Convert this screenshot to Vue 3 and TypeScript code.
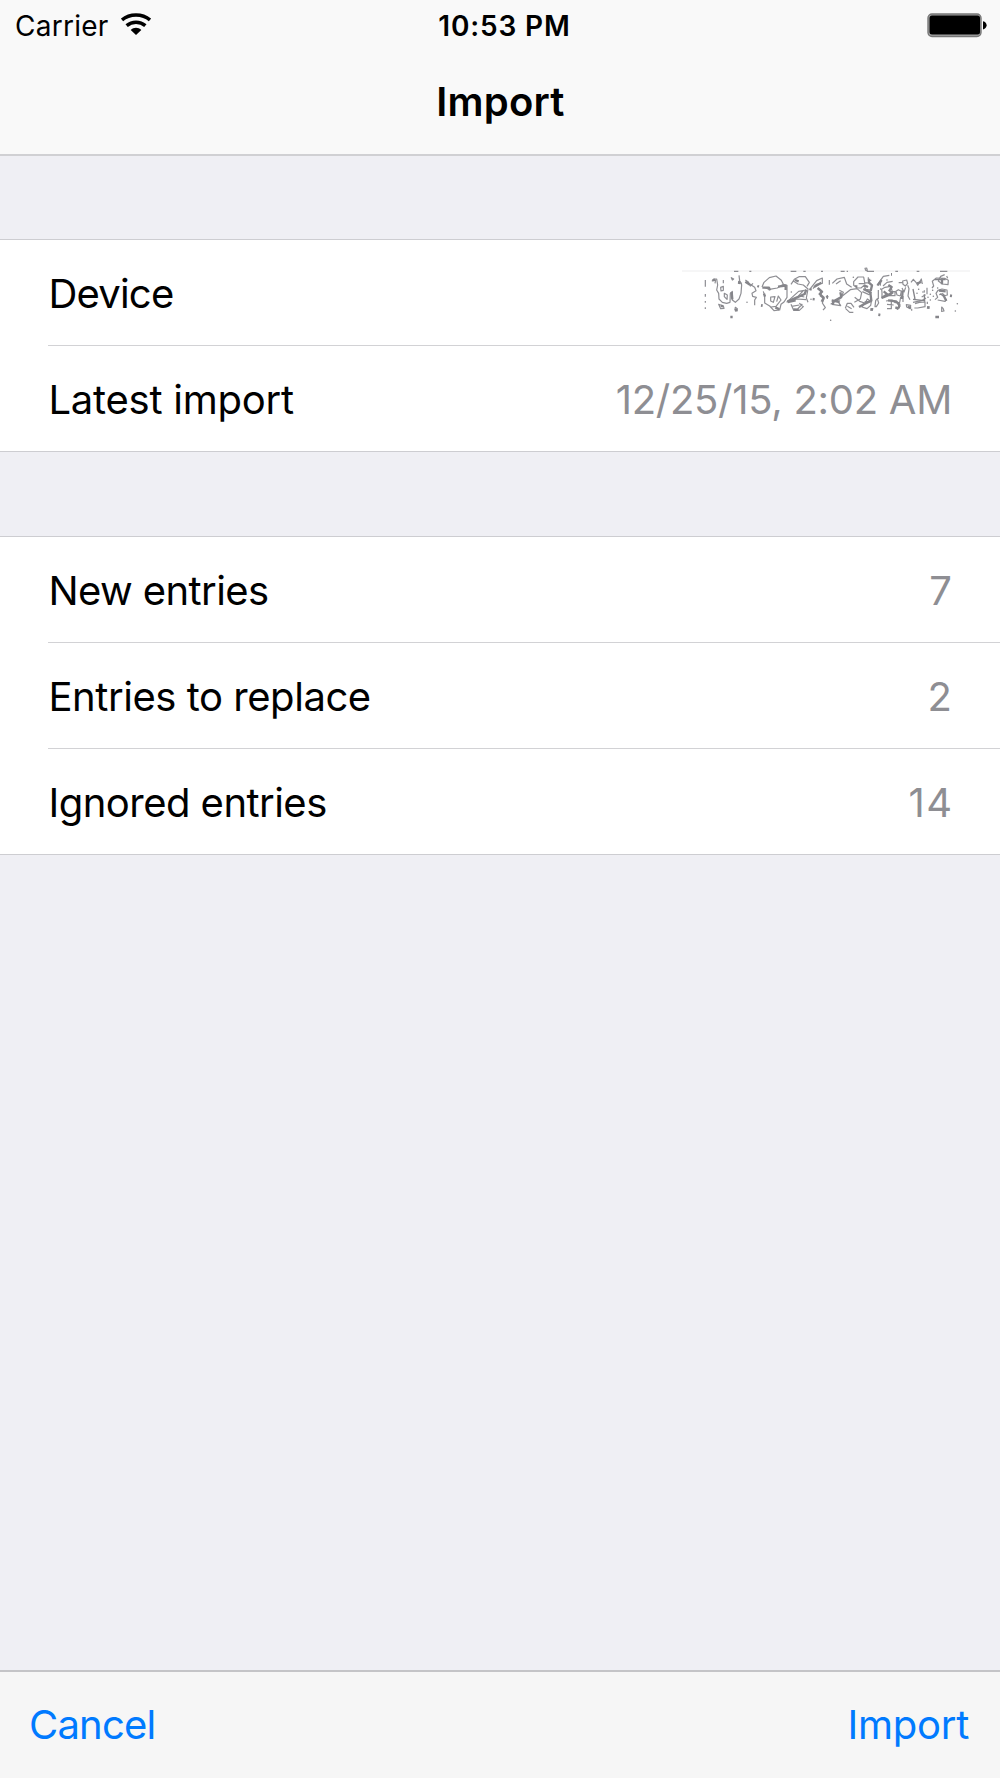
<script setup lang="ts">
interface Entry {
  label: string
  value?: string
  spacing: string
  valueSpacing?: string
}

const groups: Entry[][] = [
  [
    { label: 'Device', spacing: 'sp-device' },
    { label: 'Latest import', value: '12/25/15, 2:02 AM', spacing: 'sp-latest', valueSpacing: 'sp-date' },
  ],
  [
    { label: 'New entries', value: '7', spacing: 'sp-new' },
    { label: 'Entries to replace', value: '2', spacing: 'sp-replace' },
    { label: 'Ignored entries', value: '14', spacing: 'sp-ignored', valueSpacing: 'sp-count' },
  ],
]
</script>

<template>
  <div class="screen">
    <header class="top">
      <div class="status">
        <div class="carrier">
          <span class="carrier-name">Carrier</span>
          <svg class="wifi" width="30" height="22" viewBox="0 0 90 66">
            <g fill="none" stroke="#000" stroke-width="10.5">
              <path d="M3 21C26 1 64 1 87 21" />
              <path d="M17 38C33 24 57 24 73 38" />
            </g>
            <path d="M29 51C38 42 52 42 61 51L45 66Z" />
          </svg>
        </div>
        <span class="time">10:53 PM</span>
        <div class="power">
          <svg width="60" height="25" viewBox="0 0 60 25">
            <rect x="1" y="1" width="53" height="22.5" rx="4" fill="#a3a3a3" stroke="#777" stroke-width="1.4" />
            <rect x="2.5" y="2.5" width="50.5" height="19" rx="2.5" fill="#000" />
            <path d="M56 8.2C60.8 9 60.8 15.6 56 16.4Z" />
          </svg>
        </div>
      </div>
      <h1 class="title">Import</h1>
    </header>

    <main class="content">
      <section v-for="(group, g) in groups" :key="g" class="group">
        <div v-for="row in group" :key="row.label" class="row">
          <span :class="['label', row.spacing]">{{ row.label }}</span>
          <span v-if="row.value" :class="['value', row.valueSpacing]">{{ row.value }}</span>
          <svg v-else class="scribble" width="300" height="60" viewBox="30 105 900 180">
            <path d="M36 123H900" stroke="#ededee" stroke-width="3" />
            <g fill="none" stroke="#8e8e93" stroke-width="3.6" stroke-linejoin="round">
              <path d="M106 150V170M106 192V200M106 213V218M106 232V237M192 124H205M238 124H244M362 124H379M400 124H407M453 124H459M512 124H524M530 124H534M590 124H612M676 124H684M740 124H748M810 124H832" />
              <path d="M126 154L131 147H140L143 165L140 180L146 190L147 207L157 217L170 220L180 217L181 190L187 184V210L196 217L207 207L213 190L215 164L209 152L207 136" />
              <path d="M137 148L135 160M160 150V160M152 172L160 169V181L153 183ZM163 190L172 195L171 208L163 200ZM146 223L160 228L162 235L152 236ZM196 232L202 236L201 243L195 238ZM184 143L191 147L187 150Z" />
              <path d="M204 157L216 160M226 150L235 156L241 168L249 160M240 163L254 172L258 182L246 190L248 199L259 202L254 210V226" />
              <path d="M276 171L282 157L298 143L318 138L334 151L340 163L351 166V202L342 216L333 223L329 240L312 242L299 228L284 219V197L280 184M283 172L298 178L322 174L340 163M302 201L315 200L310 217L302 213ZM320 215L325 198L333 210L318 229L303 231" />
              <path d="M363 163L373 148L387 140H406L418 157L411 169M370 153L384 162L400 165L414 177L409 204L414 217M350 217L366 202L386 184L408 180M350 215L382 207L408 209M363 223L371 241H388L400 230L388 220M365 229L388 225M383 237L397 222M401 181L386 197L403 201" />
              <path d="M421 176L440 152L457 144L457 160L439 163L429 176M443 175L455 187L451 198L462 206L457 219L466 233L459 240M478 150V164M482 223L500 210H511M472 195V207" />
              <path d="M487 160L501 147L523 142L530 162L545 172M512 152L498 162M508 181L520 187L513 204L486 215M516 199L541 179L561 176L575 188L571 207L553 217M486 223L512 227L502 211" />
              <path d="M551 155L564 141H581L584 158L597 159L606 165L603 180L587 178L582 166L573 174H562L551 166ZM566 161H586M595 142V151L604 151M554 202L569 214L584 219L576 231L591 236L602 226L604 215H584M526 235L532 220H543L552 232M527 236L539 247H550M532 229L545 236M586 218L592 207L605 215M577 185L597 194L605 187" />
              <path d="M621 166L633 149L640 139L658 136M631 167L632 154M625 180V207M617 212L622 206L626 219L619 230H615ZM605 236L610 237" />
              <path d="M639 168L651 157L668 154M686 158H700M635 178L645 172L662 169L667 185L648 197L636 204V188ZM659 185H675V197H656M648 213L666 210L676 218L689 217L692 201M651 223L671 225M664 214V236H651M681 220L690 228L681 239M678 184L685 179L694 184L691 198L681 195ZM696 174L702 186L707 172M699 198V216M698 153L710 150L713 160L706 168L699 163Z" />
              <path d="M709 224L722 226L721 236L710 231ZM713 166L717 176L714 198L720 209M723 157L730 148L738 157L743 166L754 147L757 162M735 221L748 217L765 216V230L743 234H733M729 217L757 211L768 204M725 236V242M755 201L767 194M756 186L765 186" />
              <path d="M771 173V193M772 215V222M786 174L791 168L787 154L799 144L824 145L835 151L834 164L817 162L805 153L812 139L824 134M830 138L833 145M795 209L803 202L798 190L804 181L816 177L831 180L832 195L820 198L810 191M803 210L825 214L830 207M815 231L819 235L822 243L815 244Z" />
              <path d="M585 115L590 114L592 121H587Z" />
            </g>
            <g fill="none" stroke="#85858a" stroke-width="8" stroke-linejoin="round">
              <path d="M128 151L135 149M185 186L187 208M208 153L207 162M226 155L240 164M262 168L267 170M277 173L297 173L300 181M324 170L347 167L347 180M282 191L285 200M316 232L328 238M375 150L386 154M352 215L381 202L404 192L409 179M353 216L377 211M370 238L386 239M432 171L454 158M418 177L425 179M443 174L456 185L449 192L461 203L455 215M428 207L434 208M469 198L474 203M485 211L509 216M511 187L514 201L491 214L488 224M597 146V158L606 166L602 183M582 166L594 171M580 177L601 187L604 212L579 224L567 231M555 168L562 170M623 166L635 150M655 165L665 171L657 184M641 184L652 193L635 204M669 186L661 193L639 202M654 211L678 214L688 223L686 235M676 232L686 236M698 181L696 207M741 160L754 156M714 229L722 235M816 145V163M807 182L827 184M819 193L829 213" stroke-width="7" />
              <path d="M729 177L735 207M729 208L764 212M763 193L764 215M795 149H827M808 194L820 191" stroke-width="4" />
              <path d="M181 261L188 261M197 237L199 244M153 227L159 230M273 226L278 227M601 238L609 239M625 254L631 255M771 232L779 233M796 261L807 261M840 197L846 198M663 133L666 133" />
            </g>
            <g fill="#85858a">
              <circle v-for="(d, i) in [[231,217],[364,186],[423,208],[482,271],[651,150],[746,178],[763,183],[774,202],[781,193],[790,199],[803,174],[788,181],[856,243],[862,221],[550,142],[632,177],[741,190],[781,210]]" :key="i" :cx="d[0]" :cy="d[1]" r="2.3" />
            </g>
          </svg>
        </div>
      </section>
    </main>

    <footer class="toolbar">
      <button class="action sp-cancel">Cancel</button>
      <button class="action sp-action">Import</button>
    </footer>
  </div>
</template>

<style>
body {
  margin: 0;
}
</style>

<style scoped>
.screen {
  display: flex;
  flex-direction: column;
  width: 1000px;
  height: 1778px;
  background: #efeff4;
  color: #000;
  font-family: Inter, "Liberation Sans", sans-serif;
  font-size: 40px;
  font-optical-sizing: none;
  overflow: hidden;
}
.top {
  box-sizing: border-box;
  height: 156px;
  flex: none;
  background: #f9f9f9;
  border-bottom: 2px solid #d0d0d3;
}
.status {
  display: grid;
  grid-template-columns: 1fr auto 1fr;
  align-items: center;
  height: 50px;
  padding: 0 13px 0 15px;
  font-size: 28px;
}
.carrier {
  display: flex;
  align-items: center;
  gap: 12px;
}
.carrier-name {
  width: 94px;
  padding-top: 1px;
  letter-spacing: 0.25px;
  white-space: nowrap;
}
.wifi {
  margin-top: -3px;
}
.time {
  padding-top: 1px;
  font-weight: 600;
  letter-spacing: 0.85px;
  margin-left: 7px;
}
.power {
  display: flex;
  justify-content: flex-end;
}
.title {
  margin: 0;
  line-height: 48px;
  padding: 28px 0 0 1px;
  font-size: 40px;
  font-weight: 600;
  letter-spacing: 0.2px;
  text-align: center;
}
.content {
  flex: 1;
}
.group {
  margin-top: 83px;
  border-top: 1px solid #cdcdd1;
  border-bottom: 1px solid #cdcdd1;
  background: #fff;
}
.group + .group {
  margin-top: 84px;
}
.row {
  display: flex;
  align-items: center;
  justify-content: space-between;
  box-sizing: border-box;
  height: 106px;
  margin-left: 48px;
  padding-right: 48px;
  border-bottom: 1px solid #d2d2d5;
}
.row:last-child {
  height: 105px;
  border-bottom: 0;
}
.label,
.value {
  padding-top: 2px;
  line-height: 48px;
  white-space: nowrap;
}
.label {
  padding-left: 0.5px;
}
.value {
  color: #8e8e93;
}
.sp-device {
  letter-spacing: -0.8px;
}
.sp-latest {
  letter-spacing: -0.25px;
}
.sp-new {
  letter-spacing: -0.6px;
}
.sp-replace {
  letter-spacing: -0.45px;
}
.sp-ignored {
  letter-spacing: -0.53px;
}
.sp-date {
  letter-spacing: -0.28px;
}
.sp-count {
  margin-right: -1.5px;
  letter-spacing: 1.5px;
}
.scribble {
  margin: 5px -28px 0 0;
}
.toolbar {
  display: flex;
  align-items: center;
  justify-content: space-between;
  box-sizing: border-box;
  height: 108px;
  flex: none;
  padding: 0 31px 0 29px;
  background: #f6f6f6;
  border-top: 2px solid #c4c4c7;
}
.action {
  padding: 0;
  border: 0;
  background: none;
  color: #007aff;
  font: inherit;
  line-height: 48px;
}
.sp-cancel {
  letter-spacing: -0.8px;
}
.sp-action {
  letter-spacing: -0.25px;
}
</style>
